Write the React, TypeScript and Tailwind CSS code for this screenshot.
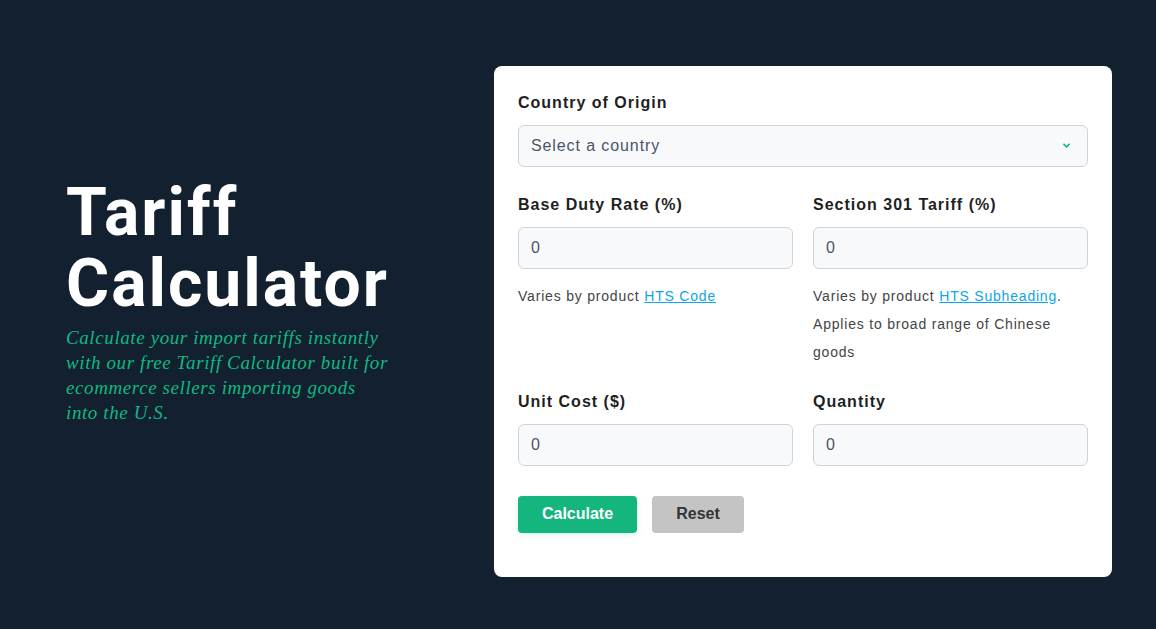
import { useState } from "react";

const Field = ({
  label,
  value,
  onChange,
  children,
}: {
  label: string;
  value: string;
  onChange: (v: string) => void;
  children?: React.ReactNode;
}) => (
  <div className="flex flex-col">
    <label className="text-[16px] font-bold tracking-[1px] text-[#1f1f1f] leading-[22px] mb-[11px]">
      {label}
    </label>
    <input
      value={value}
      onChange={(e) => onChange(e.target.value)}
      className="h-[42px] w-full rounded-[6px] border border-[#cfd4dc] bg-[#f8f9fb] px-3 text-[16px] tracking-[0.8px] text-[#4a5568] outline-none"
    />
    {children}
  </div>
);

const App = () => {
  const [base, setBase] = useState("0");
  const [s301, setS301] = useState("0");
  const [cost, setCost] = useState("0");
  const [qty, setQty] = useState("0");

  const reset = () => {
    setBase("0");
    setS301("0");
    setCost("0");
    setQty("0");
  };

  return (
    <div
      className="min-h-[629px] w-full bg-[#12202f] flex items-center py-[52px] pl-[66px]"
      style={{ fontFamily: '"Liberation Sans", Arial, sans-serif' }}
    >
      {/* left intro */}
      <div className="w-[428px] shrink-0 -mt-[28px]">
        <h1
          className="text-[66px] font-bold leading-[71px] tracking-[2px] text-white"
          style={{ fontFamily: "Roboto, sans-serif" }}
        >
          Tariff
          <br />
          Calculator
        </h1>
        <p
          className="mt-[6px] w-[323px] text-[19px] italic leading-[25px] tracking-[0.6px] text-[#10b981]"
          style={{ fontFamily: '"Liberation Serif", serif' }}
        >
          Calculate your import tariffs instantly with our free Tariff Calculator built for ecommerce sellers importing goods into the U.S.
        </p>
      </div>

      {/* form card */}
      <div className="mt-[13px] w-[618px] rounded-[8px] bg-white px-6 pt-[26px] pb-[44px]">
        <label className="block text-[16px] font-bold tracking-[1px] text-[#1f1f1f] leading-[22px] mb-[11px]">
          Country of Origin
        </label>
        <div className="relative">
          <select className="h-[42px] w-full appearance-none rounded-[6px] border border-[#cfd4dc] bg-[#f8f9fb] px-3 text-[16px] tracking-[0.9px] text-[#4a5568] outline-none">
            <option>Select a country</option>
          </select>
          <svg
            className="pointer-events-none absolute right-[18px] top-[18px]"
            width="7"
            height="5"
            viewBox="0 0 7 5"
          >
            <path d="M0.5 0.8 L3.5 3.8 L6.5 0.8" fill="none" stroke="#10b981" strokeWidth="1.6" />
          </svg>
        </div>

        <div className="mt-[27px] grid grid-cols-2 gap-x-5">
          <Field label="Base Duty Rate (%)" value={base} onChange={setBase}>
            <p className="mt-[13px] text-[14px] leading-[28px] tracking-[0.8px] text-[#444]">
              Varies by product{" "}
              <a href="#" className="text-[#0ea5e9] underline">
                HTS Code
              </a>
            </p>
          </Field>
          <Field label="Section 301 Tariff (%)" value={s301} onChange={setS301}>
            <p className="mt-[13px] text-[14px] leading-[28px] tracking-[0.8px] text-[#444]">
              Varies by product{" "}
              <a href="#" className="text-[#0ea5e9] underline">
                HTS Subheading
              </a>
              .
              <br />
              Applies to broad range of Chinese goods
            </p>
          </Field>
        </div>

        <div className="mt-[25px] grid grid-cols-2 gap-x-5">
          <Field label="Unit Cost ($)" value={cost} onChange={setCost} />
          <Field label="Quantity" value={qty} onChange={setQty} />
        </div>

        <div className="mt-[30px] flex gap-[15px]">
          <button className="h-[37px] w-[119px] rounded-[4px] bg-[#14b67e] text-[16px] font-bold text-white shadow-[0_2px_6px_rgba(16,185,129,0.15)]">
            Calculate
          </button>
          <button
            onClick={reset}
            className="h-[37px] w-[92px] rounded-[4px] bg-[#c4c4c4] text-[16px] font-bold text-[#333]"
          >
            Reset
          </button>
        </div>
      </div>
    </div>
  );
};

export default App;
